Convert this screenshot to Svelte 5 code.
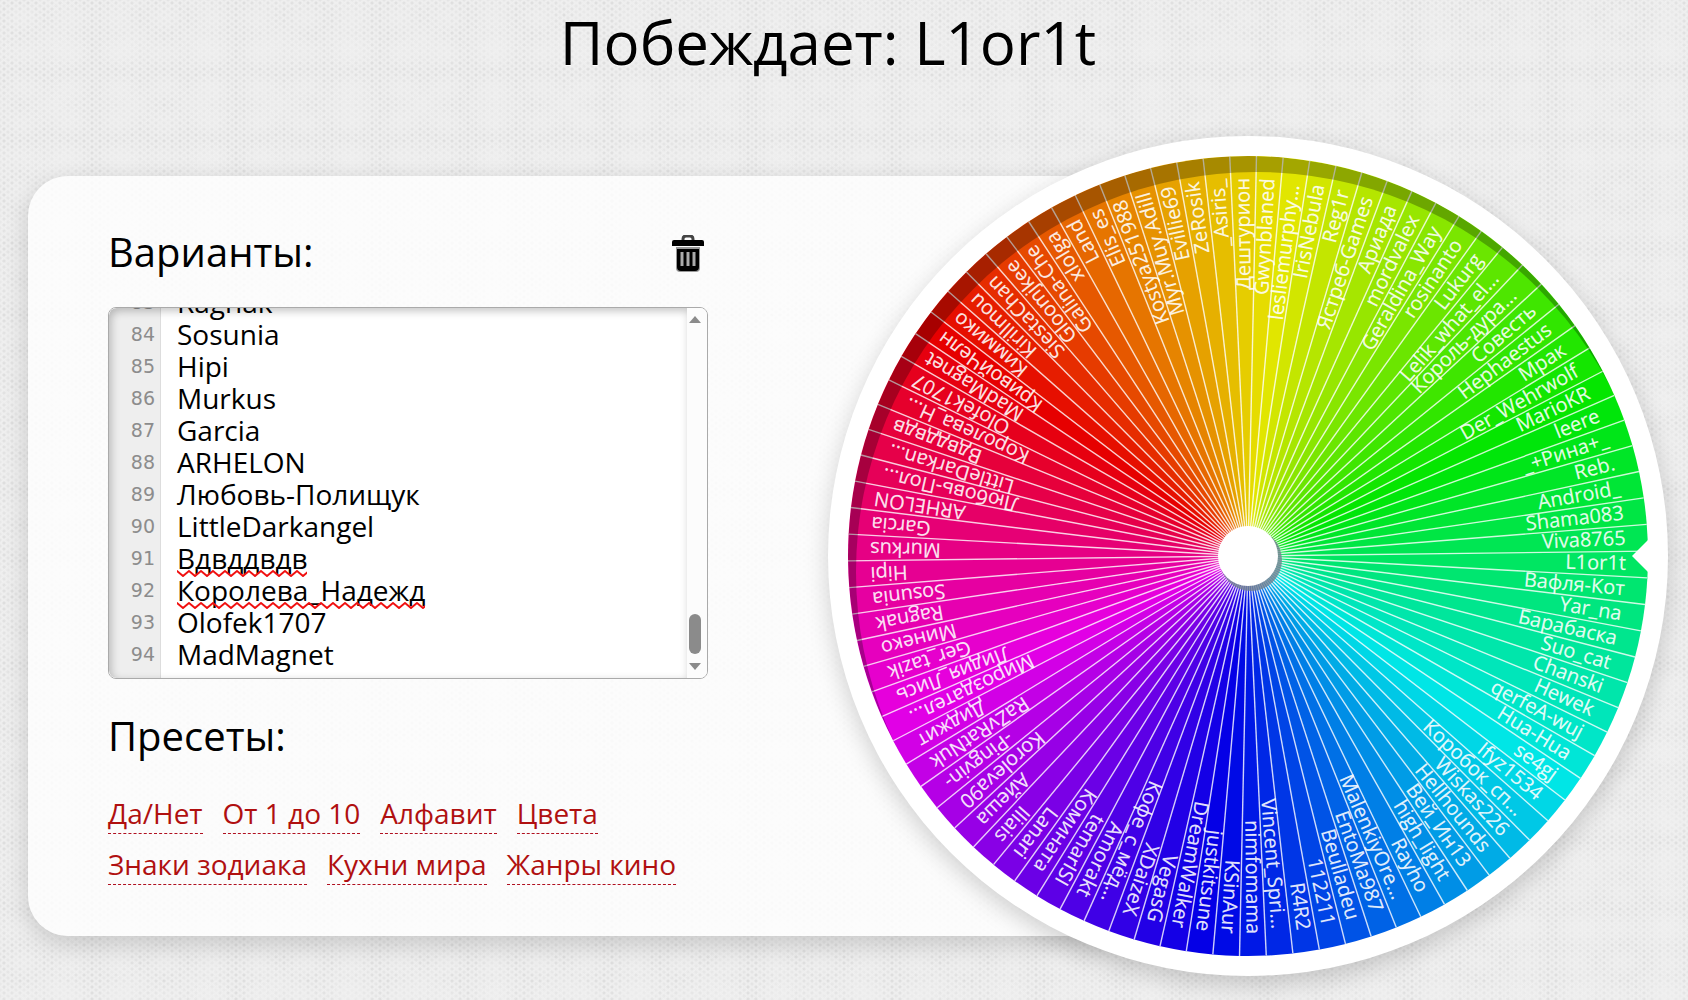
<script lang="ts">
	import { onMount } from 'svelte';

	const names = [
		'КривойЧелн', 'Киммико', 'Kirillmou', 'SiestaChan', 'Gloomjkee', 'Galina-Che', 'xlolga', 'Land',
		'Elis_es', 'Kostya251988', 'Myr.Muy.Adill', 'Evillie69', 'ZeRosik', '_Asiris_', 'Дештурион',
		'Gwynblaned', 'lesliemurphy...', 'IrisNebula', 'Reg1r', 'Ястреб-Games', 'Ариада', 'mordvalex',
		'Geraldina_Way', 'rosinanto', 'Lukurg', 'Lelik_what_el...', 'Король-дура...', 'Совесть',
		'Hephaestus', 'Мрак', 'Der_Wehrwolf', 'MarioKR', 'leere', '_+Рина+_', 'Reb.', 'Android_',
		'Shama083', 'Viva8765', 'L1or1t', 'Вафля-Кот', 'Yar_na', 'Барабаска', 'Suo_cat', 'Chanski',
		'Hewek', 'qerfeA-wuj', 'Hua-Hua', 'se4gj', 'Ifyz1534', 'Коробок_сп...', 'Wiskas226',
		'Hellhounds', 'Вей_Ин13', 'high_light', 'Rayho', 'MalenkiyOre...', 'EntoMa987', 'Beulladeu',
		'112211', 'R4R2', 'Vincent_Spri...', 'nimfomama', 'KSinAur', 'justkitsune', 'DreamWalker',
		'VegasG', 'XDaizeX', 'Кофе_с_мёд...', 'Amorakt', 'temarISI', 'Комината', 'Lanari', 'Iliais',
		'Айеша', 'Koroleva90', '-Pingvin-', 'RaZvRatNuk', 'Диджит', 'Мироздател...', 'Лидия_Лись',
		'Ger_tazik', 'Минеко', 'Ragnak', 'Sosunia', 'Hipi', 'Murkus', 'Garcia', 'ARHELON',
		'Любовь-Полищук', 'LittleDarkangel', 'Вдвддвдв', 'Королева_Надежд', 'Olofek1707', 'MadMagnet'
	];

	// shortened labels for names that do not fit on the wheel
	const labels: Record<string, string> = {
		'Любовь-Полищук': 'Любовь-Пол...',
		LittleDarkangel: 'LittleDarkan...',
		'Королева_Надежд': 'Королева_Н...'
	};

	const presets = [
		['Да/Нет', 'От 1 до 10', 'Алфавит', 'Цвета'],
		['Знаки зодиака', 'Кухни мира', 'Жанры кино']
	];

	const lineHeight = 32;
	const padding = 8;
	const viewHeight = 370;
	const misspelled = [
		{ line: 90, width: 130 },
		{ line: 91, width: 248 }
	];

	let text = $state(names.join('\n') + '\n\n');
	let scrollTop = $state(82 * lineHeight + 30);
	let area: HTMLTextAreaElement;

	// the gutter holds only the lines that are in view
	let count = $derived(text.trimEnd().split('\n').length);
	let first = $derived(Math.max(0, Math.floor((scrollTop - padding) / lineHeight)));
	let last = $derived(Math.min(count, Math.floor((scrollTop + viewHeight - padding) / lineHeight) + 1));
	let visible = $derived(Array.from({ length: last - first }, (_, i) => first + i + 1));

	let contentHeight = $derived(text.split('\n').length * lineHeight + padding * 2);
	let thumbTop = $derived((scrollTop / Math.max(1, contentHeight - viewHeight)) * 296);

	const winner = 'L1or1t';
	const radius = 400;
	const step = 360 / names.length;
	const rotation = -0.7 - names.indexOf(winner) * step;

	function point(angle: number, r = radius) {
		const a = (angle * Math.PI) / 180;
		return `${(r * Math.cos(a)).toFixed(2)} ${(r * Math.sin(a)).toFixed(2)}`;
	}

	const sectors = names.map((name, i) => {
		const from = rotation + i * step;
		const label = labels[name] ?? name;
		return {
			label,
			end: label.endsWith('...') ? 374 : 378,
			middle: from + step / 2,
			color: `hsl(${i * step}, 100%, 45%)`,
			path: `M0 0L${point(from)}A${radius} ${radius} 0 0 1 ${point(from + step + 0.1)}Z`,
			line: `M0 0L${point(from)}`
		};
	});

	onMount(() => {
		area.scrollTop = scrollTop;
	});
</script>

<main>
	<h1>Побеждает: {winner}</h1>

	<div class="board">
		<div class="card">
			<section class="settings">
				<div class="heading">
					<h2><label for="variants">Варианты:</label></h2>
					<button type="button" aria-label="Очистить">
						<svg viewBox="0 0 32 37" width="32" height="37">
							<path d="M4 12H28V33Q28 37 24 37H8Q4 37 4 33Z" fill="#999" />
							<path d="M11 6V4Q11 1 14 1H18Q21 1 21 4V6" fill="none" stroke="#444" stroke-width="3" />
							<path d="M2 5H30Q32 5 32 7V11H0V7Q0 5 2 5Z" />
							<path d="M5 14H27V32Q27 36 23 36H9Q5 36 5 32Z" />
							<path d="M10 17V31M16 17V31M22 17V31" stroke="#aaa" stroke-width="3" />
						</svg>
					</button>
				</div>

				<div class="editor">
					<div class="gutter" aria-hidden="true">
						<div style="transform: translateY({first * lineHeight - scrollTop}px)">
							{#each visible as number}
								<span>{number}</span>
							{/each}
						</div>
					</div>
					<div class="field">
						<textarea
							id="variants"
							wrap="off"
							spellcheck="false"
							bind:this={area}
							bind:value={text}
							onscroll={() => (scrollTop = area.scrollTop)}
						></textarea>
						{#each misspelled as { line, width }}
							<svg class="squiggle" style="top: {(line + 1) * lineHeight + 4 - scrollTop}px" {width} height="7">
								<defs>
									<pattern id="wave{line}" width="12" height="7" patternUnits="userSpaceOnUse">
										<path d="M-1 0L0 1L6 6L12 1L13 0" fill="none" stroke="#f01010" stroke-width="2" />
									</pattern>
								</defs>
								<rect {width} height="7" fill="url(#wave{line})" />
							</svg>
						{/each}
					</div>
					<div class="scrollbar" aria-hidden="true">
						<svg viewBox="0 0 12 7" width="12" height="7"><path d="M0 7L6 0L12 7Z" /></svg>
						<div class="track">
							<div class="thumb" style="transform: translateY({thumbTop}px)"></div>
						</div>
						<svg viewBox="0 0 12 7" width="12" height="7"><path d="M0 0L6 7L12 0Z" /></svg>
					</div>
				</div>

				<h2>Пресеты:</h2>
				<nav>
					{#each presets as row}
						<div>
							{#each row as preset}
								<a href="#preset">{preset}</a>
							{/each}
						</div>
					{/each}
				</nav>
			</section>
		</div>

		<div class="wheel">
			<svg viewBox="-420 -420 840 840">
				<defs>
					<mask id="rim">
						<circle r="400" fill="#fff" />
						<circle cx="8" cy="16" r="400" fill="#000" />
					</mask>
				</defs>
				{#each sectors as sector}
					<path d={sector.path} fill={sector.color} />
				{/each}
				{#each sectors as sector}
					<path class="line" d={sector.line} />
				{/each}
				{#each sectors as sector}
					<text x={sector.end} y="6" transform="rotate({sector.middle})">{sector.label}</text>
				{/each}
				<circle r="400" fill="#000" opacity="0.27" mask="url(#rim)" />
				<circle class="hub-shadow" cx="3" cy="4" r="31" />
				<circle r="30" fill="#fff" />
				<path d="M384 0L402 -18V18Z" fill="#fff" />
			</svg>
		</div>
	</div>
</main>

<style>
	:global(body) {
		margin: 0;
		background-color: #eee;
		background-image:
			radial-gradient(ellipse, rgba(240, 240, 240, 0.6), transparent 70%),
			radial-gradient(ellipse, rgba(240, 240, 240, 0.6), transparent 70%),
			radial-gradient(circle, #dedede 1px, transparent 2px),
			radial-gradient(circle, #e4e4e4 1px, transparent 2px);
		background-size: 47px 35px, 73px 59px, 8px 6px, 8px 6px;
		background-position: 0 0, 20px 16px, 0 0, 4px 3px;
		font-family: 'Open Sans', 'Noto Sans', sans-serif;
		color: #000;
	}

	main {
		padding: 0 20px 64px 28px;
	}

	h1 {
		margin: 0;
		padding: 0 40px 92px 0;
		font-size: 60px;
		font-weight: 400;
		line-height: 84px;
		text-align: center;
		text-shadow: 0 1px 1px #fff;
	}

	h2 {
		margin: 0;
		font-size: 40px;
		font-weight: 400;
		line-height: 56px;
	}

	.board {
		--wheel: min(50vw, 840px);
		display: flex;
		align-items: center;
	}

	.card {
		flex: 1;
		box-sizing: border-box;
		min-width: 0;
		min-height: 760px;
		margin-right: calc(var(--wheel) / -2);
		padding: 48px 0 48px 80px;
		border-radius: 40px;
		background: rgba(255, 255, 255, 0.8);
		box-shadow: 0 8px 24px rgba(0, 0, 0, 0.16);
	}

	.settings {
		max-width: 600px;
	}

	.heading {
		display: flex;
		justify-content: space-between;
		align-items: center;
		margin-bottom: 27px;
	}

	button {
		display: flex;
		margin-right: 4px;
		padding: 2px 0 0;
		border: 0;
		background: none;
		cursor: pointer;
	}

	.editor {
		position: relative;
		display: flex;
		height: 370px;
		margin-bottom: 29px;
		overflow: hidden;
		border: 1px solid #aaa;
		border-radius: 8px;
		background: #fff;
	}

	.editor::after {
		content: '';
		position: absolute;
		inset: 0 20px 0 0;
		border-radius: 8px 0 0 8px;
		box-shadow: inset 2px 3px 8px rgba(0, 0, 0, 0.24);
		pointer-events: none;
	}

	.gutter {
		flex: none;
		box-sizing: border-box;
		width: 52px;
		padding: 8px 5px 0 0;
		overflow: hidden;
		border-right: 1px solid #ddd;
		background: #eee;
		color: #8c8c8c;
		font-family: 'DejaVu Sans', sans-serif;
		font-size: 19px;
		text-align: right;
	}

	.gutter span {
		display: block;
		line-height: 32px;
	}

	.field {
		position: relative;
		flex: 1;
		min-width: 0;
		overflow: hidden;
	}

	textarea {
		display: block;
		box-sizing: border-box;
		width: 100%;
		height: 100%;
		padding: 8px 16px;
		border: 0;
		outline: none;
		overflow: hidden scroll;
		resize: none;
		scrollbar-width: none;
		background: transparent;
		color: #000;
		font: 28px/32px 'Open Sans', 'Noto Sans', sans-serif;
	}

	.scrollbar {
		display: flex;
		flex: none;
		flex-direction: column;
		align-items: center;
		gap: 2px;
		box-sizing: border-box;
		width: 20px;
		padding: 8px 4px 8px 0;
		background: #fcfcfc;
		fill: #8b8b8b;
	}

	.track {
		flex: 1;
	}

	.thumb {
		width: 12px;
		height: 40px;
		border-radius: 6px;
		background: #8b8b8b;
	}

	.squiggle {
		position: absolute;
		left: 16px;
		pointer-events: none;
	}

	nav {
		display: grid;
		gap: 11px;
		margin-top: 30px;
	}

	nav div {
		display: flex;
		flex-wrap: wrap;
		gap: 11px 20px;
	}

	a {
		padding-bottom: 1px;
		border-bottom: 1px dashed #b01020;
		color: #b01010;
		font-size: 28px;
		line-height: 38px;
		text-decoration: none;
	}

	.wheel {
		flex: none;
		width: var(--wheel);
		margin: -40px 0;
		border-radius: 50%;
		background: #fff;
		box-shadow: 0 8px 24px rgba(0, 0, 0, 0.18);
	}

	.wheel svg {
		display: block;
		width: 100%;
	}

	.wheel text {
		fill: #fff;
		fill-opacity: 0.9;
		stroke: #fff;
		stroke-opacity: 0.3;
		stroke-width: 0.5;
		font-size: 20px;
		text-anchor: end;
	}

	.line {
		stroke: #fff;
		stroke-opacity: 0.8;
		stroke-width: 1.4;
	}

	.hub-shadow {
		fill: #708090;
		fill-opacity: 0.8;
	}
</style>
